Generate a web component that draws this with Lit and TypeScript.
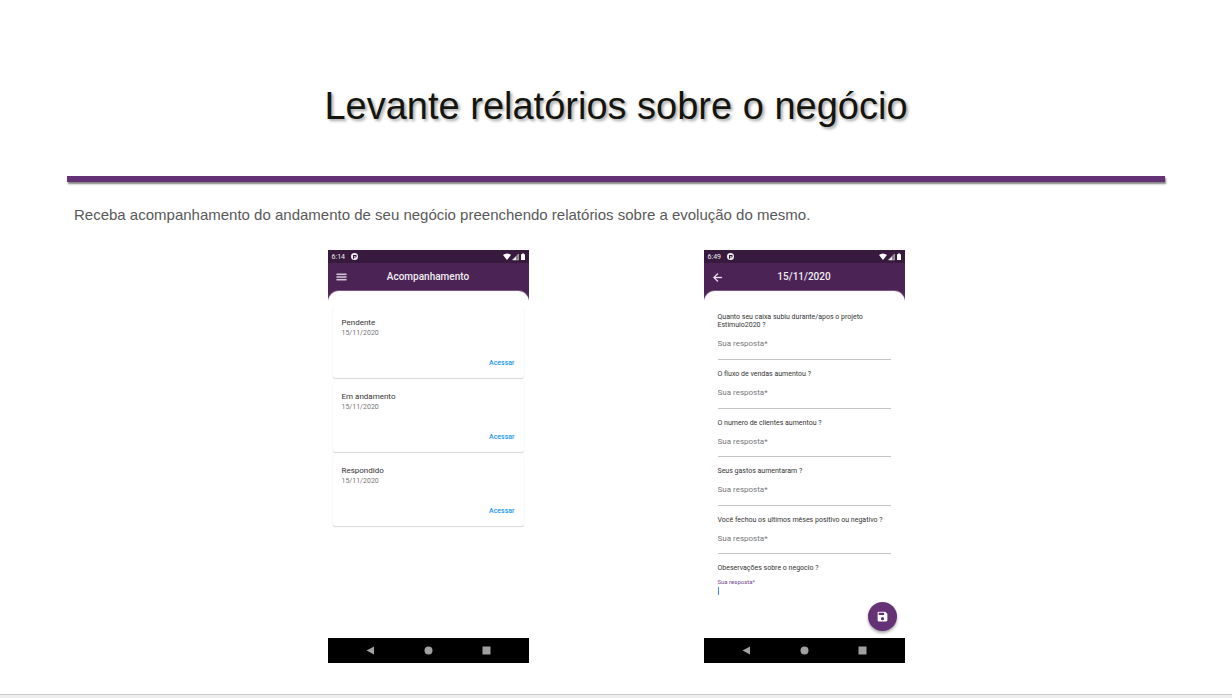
import { LitElement, html, css, svg } from "lit";
import { customElement, property } from "lit/decorators.js";

@customElement("phone-frame")
class PhoneFrame extends LitElement {
  @property() time = "";
  @property() heading = "";
  @property() action = "menu";

  static styles = css`
    :host {
      display: flex;
      flex-direction: column;
      position: relative;
      width: 201px;
      aspect-ratio: 201 / 413;
      background: #4b2354;
      color: #333;
      font-family: Roboto, sans-serif;
    }
    .status {
      display: flex;
      align-items: center;
      gap: 6px;
      height: 13px;
      padding: 0 3px 0 4px;
      background: #371a3e;
      color: #eee;
      font-size: 7px;
    }
    .status svg { display: block; }
    .signals { display: flex; align-items: center; gap: 1px; margin-left: auto; }
    .bar {
      display: grid;
      grid-template-columns: 28px 1fr 28px;
      align-items: center;
      height: 28px;
      color: #f1edf2;
    }
    .bar h2 { margin: 0; text-align: center; font-size: 10px; line-height: 14px; font-weight: 500; }
    .bar button {
      display: flex;
      justify-content: center;
      padding: 0;
      border: 0;
      background: none;
      color: inherit;
    }
    .body {
      display: flex;
      flex: 1;
      min-height: 0;
      background: linear-gradient(#4b2354, #6d3a79 9px, #fff 9px);
    }
    .sheet {
      display: flex;
      flex-direction: column;
      flex: 1;
      min-width: 0;
      border-radius: 11px 11px 0 0;
      background: #fff;
      box-shadow: 0 -1px 0 #7a5482;
    }
    nav {
      display: grid;
      grid-template-columns: repeat(3, 58px);
      justify-content: center;
      justify-items: center;
      align-items: center;
      height: 25px;
      background: #000;
      z-index: 1;
    }
    nav button { display: flex; padding: 0; border: 0; background: none; }
  `;

  render() {
    const menu = svg`<path d="M3 5h18v2H3zM3 10h18v2H3zM3 15h18v2H3z"/>`;
    const back = svg`<path d="M20 11H7.83l5.59-5.59L12 4l-8 8 8 8 1.41-1.41L7.83 13H20z"/>`;
    return html`
      <div class="status">
        <span>${this.time}</span>
        <svg width="7" height="7" viewBox="0 0 14 14">
          <circle cx="7" cy="7" r="7" fill="#eee" />
          <path d="M4 4h6.500a3 3 0 0 1-3 5H6v2.500H4z" fill="#371a3e" />
          <path d="M6 6h3v1.500H6z" fill="#eee" />
        </svg>
        <span class="signals">
          <svg width="8" height="8" viewBox="0 0 16 16" fill="#fff"><path d="M0 4q8-6 16 0L8 14z" /></svg>
          <svg width="7" height="8" viewBox="0 0 14 16"><path d="M13 2v12H1z" fill="#8d7992" stroke="#ddd" /><path d="M1 14l7-7v7z" fill="#eee" /></svg>
          <svg width="6" height="8" viewBox="0 0 12 16" fill="#fff"><path d="M4 1h4v1.500h2V14H2V2.500h2z" /></svg>
        </span>
      </div>
      <header class="bar">
        <button aria-label=${this.action === "menu" ? "Menu" : "Voltar"}>
          <svg width="13" height="13" viewBox="0 0 24 24" fill="currentColor" stroke="currentColor" stroke-width=".5">${this.action === "menu" ? menu : back}</svg>
        </button>
        <h2>${this.heading}</h2>
      </header>
      <div class="body"><div class="sheet"><slot></slot></div></div>
      <nav>
        <button aria-label="Anterior"><svg width="9" height="9" viewBox="0 0 9 9"><path d="M8 .5v8L.5 4.500z" fill="#a0a0a0" /></svg></button>
        <button aria-label="Início"><svg width="9" height="9" viewBox="0 0 9 9"><circle cx="4.500" cy="4.500" r="4" fill="#a0a0a0" /></svg></button>
        <button aria-label="Recentes"><svg width="9" height="9" viewBox="0 0 9 9"><path d="M.5.5h8v8h-8z" fill="#a0a0a0" /></svg></button>
      </nav>
    `;
  }
}

@customElement("app-root")
class AppRoot extends LitElement {
  static styles = css`
    :host {
      display: block;
      min-height: 100vh;
      background: #eee;
      font-family: "Liberation Sans", Arial, sans-serif;
    }
    .slide {
      padding: 84px 67px 31px;
      background: #fff;
      border-bottom: 1px solid #ccc;
    }
    h1 {
      margin: 0;
      text-align: center;
      color: #15150f;
      font-size: 38px;
      line-height: 44px;
      font-weight: 400;
      text-shadow: 2px 2px 3px rgba(0, 0, 0, 0.35);
    }
    hr {
      height: 6px;
      margin: 48px 0 0;
      border: 0;
      background: #663276;
      box-shadow: 1px 2px 2px rgba(0, 0, 0, 0.5);
    }
    .lead {
      margin: 24px 7px 26px;
      color: #595959;
      font-size: 15px;
      line-height: 18px;
    }
    .phones { display: flex; flex-wrap: wrap; justify-content: center; gap: 24px 175px; }
    .cards { display: flex; flex-direction: column; gap: 4px; margin: 0; padding: 17px 5px; list-style: none; }
    .card {
      display: flex;
      flex-direction: column;
      box-sizing: border-box;
      height: 70px;
      padding: 10px 9px;
      border-radius: 2px;
      box-shadow: 0 1px 1px rgba(0, 0, 0, 0.15), 0 0 1px rgba(0, 0, 0, 0.1);
    }
    h3 { margin: 0; font-size: 8px; line-height: 10px; font-weight: 400; }
    time { color: #777; font-size: 7px; line-height: 11px; }
    .card a {
      margin-top: auto;
      align-self: flex-end;
      color: #2196f3;
      font-size: 7px;
      line-height: 10px;
      font-weight: 500;
      text-decoration: none;
    }
    form { display: flex; flex: 1; flex-direction: column; min-height: 0; padding: 22px 14px 0; }
    .field { display: flex; flex: 1; flex-direction: column; border-bottom: 1px solid #c4c4c4; padding-top: 10px; }
    .field.first { flex: none; padding: 0 0 9px; }
    .field label, .note label { font-size: 7px; line-height: 8px; }
    .field input {
      height: 12px;
      margin: 9px 0 0;
      padding: 0;
      border: 0;
      outline: 0;
      background: none;
      font: 8px/12px Roboto, sans-serif;
    }
    input::placeholder { color: #777; opacity: 1; }
    .note { display: flex; flex-direction: column; height: 84px; padding-top: 10px; box-sizing: border-box; }
    .note .hint { margin-top: 6px; color: #74438a; font-size: 6px; line-height: 7px; }
    .entry { display: flex; align-items: center; margin-top: 2px; border-left: 1px solid #4285f4; }
    .entry input { width: 100px; height: 8px; padding: 0; border: 0; outline: 0; background: none; font-size: 8px; }
    .save {
      position: absolute;
      right: 8px;
      bottom: 32px;
      display: flex;
      align-items: center;
      justify-content: center;
      width: 29px;
      height: 29px;
      padding: 0;
      border: 0;
      border-radius: 50%;
      background: #663276;
      box-shadow: 0 2px 3px rgba(0, 0, 0, 0.35);
    }
  `;

  private reports = ["Pendente", "Em andamento", "Respondido"];
  private questions = [
    "Quanto seu caixa subiu durante/apos o projeto Estimulo2020 ?",
    "O fluxo de vendas aumentou ?",
    "O numero de clientes aumentou ?",
    "Seus gastos aumentaram ?",
    "Você fechou os ultimos mêses positivo ou negativo ?",
  ];

  render() {
    return html`
      <section class="slide">
        <h1>Levante relatórios sobre o negócio</h1>
        <hr />
        <p class="lead">Receba acompanhamento do andamento de seu negócio preenchendo relatórios sobre a evolução do mesmo.</p>
        <div class="phones">
          <phone-frame time="6:14" heading="Acompanhamento">
            <ul class="cards">
              ${this.reports.map((r) => html`<li class="card"><h3>${r}</h3><time datetime="2020-11-15">15/11/2020</time><a href="#">Acessar</a></li>`)}
            </ul>
          </phone-frame>
          <phone-frame time="6:49" heading="15/11/2020" action="back">
            <form>
              ${this.questions.map((q, i) => html`
                <div class="field ${i === 0 ? "first" : ""}">
                  <label for="q${i}">${q}</label>
                  <input id="q${i}" placeholder="Sua resposta*" />
                </div>`)}
              <div class="note">
                <label for="obs">Obeservações sobre o negocio ?</label>
                <label class="hint" for="obs">Sua resposta*</label>
                <div class="entry"><input id="obs" /></div>
              </div>
              <button class="save" type="button" aria-label="Salvar">
                <svg width="13" height="13" viewBox="0 0 24 24" fill="#fff"><path d="M17 3H5a2 2 0 0 0-2 2v14a2 2 0 0 0 2 2h14a2 2 0 0 0 2-2V7zm-5 16a3 3 0 1 1 0-6 3 3 0 0 1 0 6zm3-10H5V5h10z" /></svg>
              </button>
            </form>
          </phone-frame>
        </div>
      </section>
    `;
  }
}
